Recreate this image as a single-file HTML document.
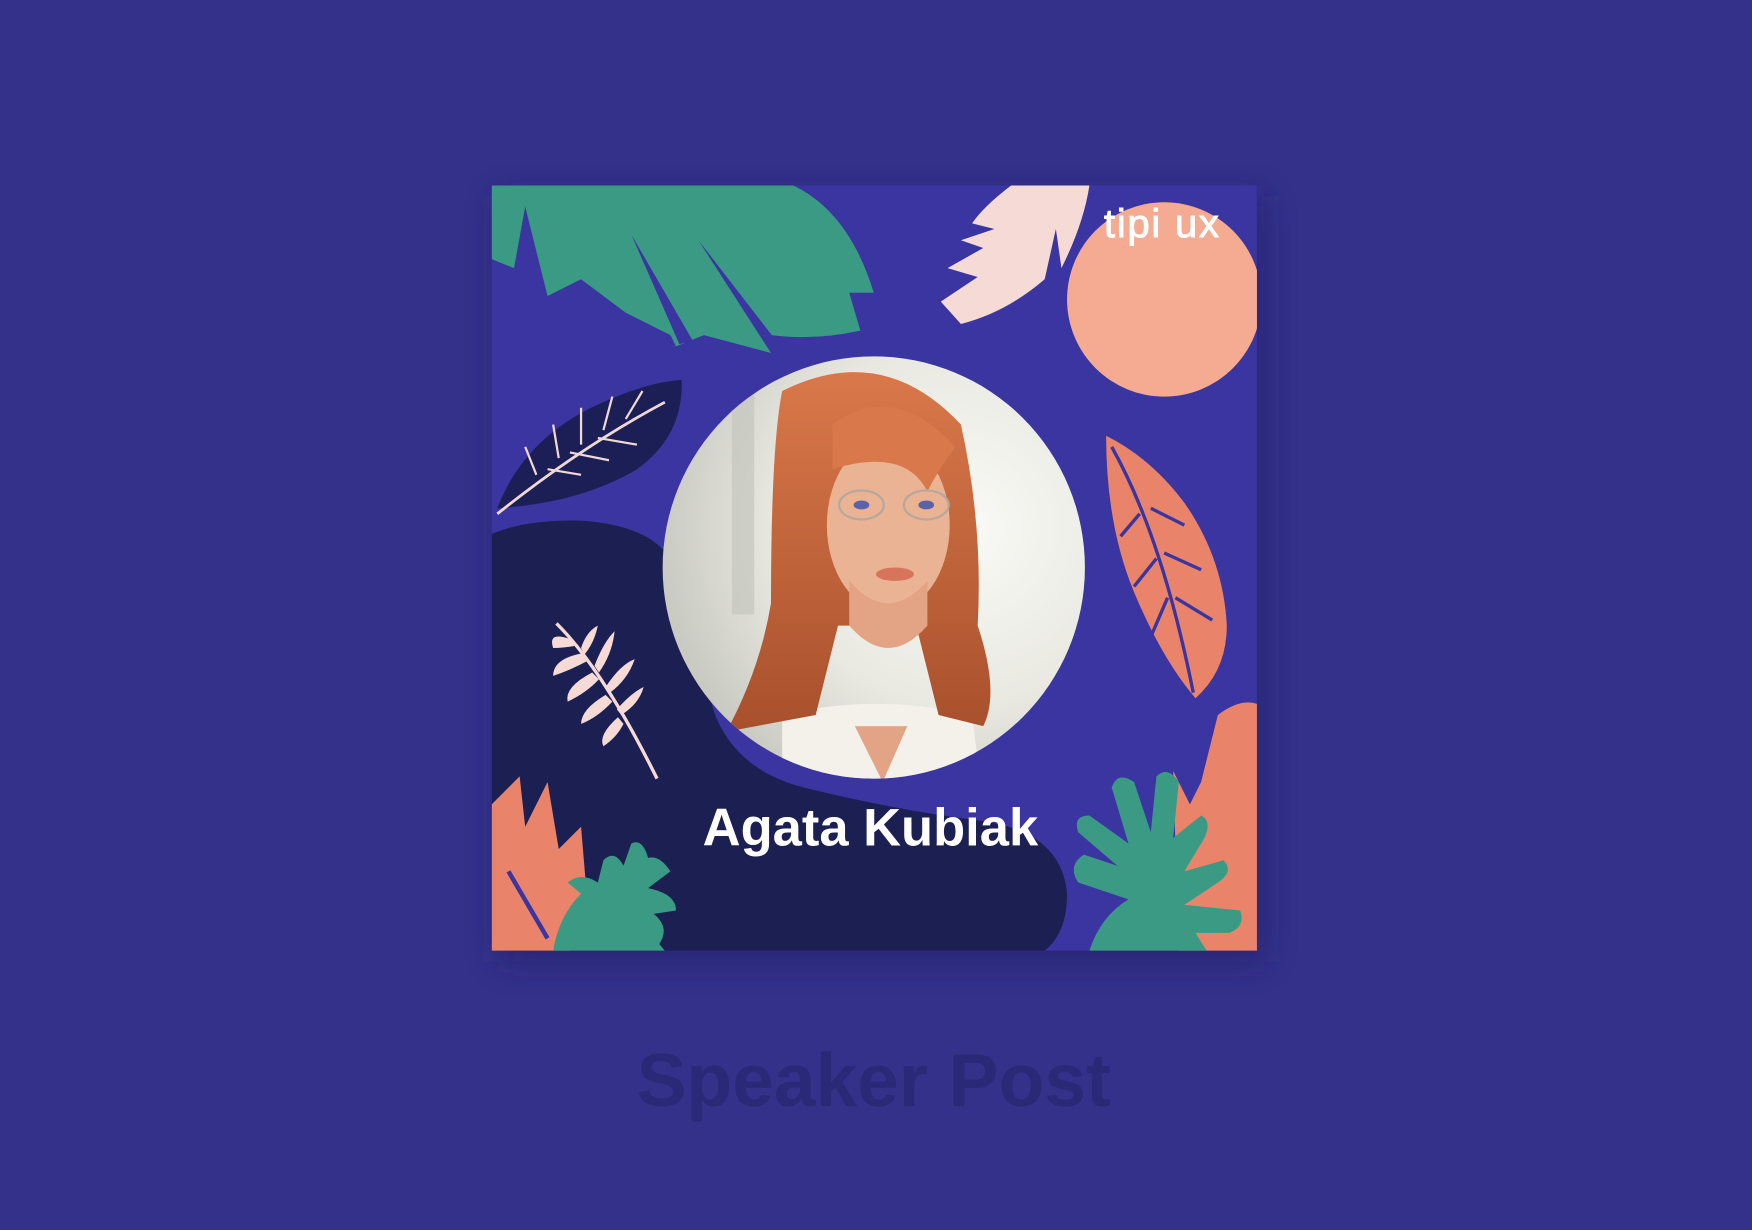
<!DOCTYPE html>
<html><head><meta charset="utf-8"><style>
html,body{margin:0;padding:0;background:#33318a;width:1752px;height:1230px;overflow:hidden}
svg{display:block}
</style></head><body>
<svg width="1752" height="1230" viewBox="0 0 1568 1101" xmlns="http://www.w3.org/2000/svg">
<defs>
<clipPath id="card"><rect x="440" y="166" width="685" height="685"/></clipPath>
<clipPath id="ph"><circle cx="782" cy="508" r="189"/></clipPath>
<filter id="sh" x="-20%" y="-20%" width="140%" height="140%"><feGaussianBlur stdDeviation="14"/></filter>
<radialGradient id="bgp" cx="0.7" cy="0.4" r="0.7"><stop offset="0" stop-color="#fafaf6"/><stop offset="0.6" stop-color="#e9e9e2"/><stop offset="1" stop-color="#c9cac2"/></radialGradient>
<linearGradient id="hair" x1="0" y1="0" x2="0" y2="1"><stop offset="0" stop-color="#d9784a"/><stop offset="1" stop-color="#a8502c"/></linearGradient>
</defs>
<rect width="1568" height="1101" fill="#33318a"/>
<rect x="446" y="176" width="685" height="685" fill="#241f66" opacity="0.6" filter="url(#sh)"/>
<g clip-path="url(#card)">
<rect x="440" y="166" width="685" height="685" fill="#3a35a0"/>
<circle cx="1042" cy="268" r="87" fill="#f4ab92"/>
<path d="M440 166 L710 166 Q760 190 782 262 L760 262 L770 296 Q730 305 690 300 L690 316 L630 300 L605 310 L570 240 L600 300 L560 280 L520 250 L490 265 L470 185 L460 240 L440 232 Z" fill="#3b9a84"/>
<path d="M565 210 L608 308 L620 305 Z M625 215 L690 316 L700 312 Z" fill="#3a35a0"/>
<path d="M975 166 L905 166 Q880 185 870 200 L890 205 L860 215 L880 222 L848 240 L875 248 L842 270 L860 290 Q900 280 935 250 L945 205 L950 240 Q970 200 975 166 Z" fill="#f6dad6"/>
<path d="M445 455 Q470 390 540 360 Q580 342 610 340 Q612 390 570 420 Q520 450 445 455 Z" fill="#1c1f55"/>
<path d="M445 460 Q520 400 595 360" stroke="#f0d8d4" stroke-width="2.5" fill="none"/>
<path d="M480 425 L470 400 M500 410 L495 380 M520 398 L520 365 M540 385 L548 355 M560 375 L575 350 M490 420 L520 425 M510 405 L545 412 M535 392 L570 398" stroke="#f0d8d4" stroke-width="2" fill="none"/>
<path d="M440 478 Q470 465 520 466 Q580 470 600 500 Q615 560 640 640 Q660 690 720 705 Q800 725 880 735 Q950 745 955 800 Q955 835 935 851 L440 851 Z" fill="#1b1f52"/>
<path d="M498 558 Q540 600 588 697" stroke="#f6dad6" stroke-width="3" fill="none"/>
<g fill="#f6dad6">
<path d="M510 572 Q490 565 495 580 Q505 580 515 578Z"/>
<path d="M520 585 Q495 590 495 605 Q510 600 525 592Z"/>
<path d="M530 602 Q505 615 508 628 Q525 620 536 608Z"/>
<path d="M542 622 Q520 635 520 648 Q535 642 548 628Z"/>
<path d="M553 642 Q535 658 540 668 Q552 660 558 648Z"/>
<path d="M520 580 Q525 565 535 560 Q532 575 523 586Z"/>
<path d="M532 596 Q540 575 550 565 Q548 585 536 602Z"/>
<path d="M542 615 Q555 595 568 590 Q562 608 546 620Z"/>
<path d="M552 635 Q565 620 576 615 Q572 630 556 640Z"/>
</g>
<path d="M990 390 Q1030 410 1060 450 Q1095 500 1098 560 Q1098 600 1070 625 Q1040 590 1015 530 Q990 470 990 390 Z" fill="#e9846b"/>
<path d="M995 400 Q1040 480 1068 620" stroke="#3a35a0" stroke-width="3" fill="none"/>
<path d="M1020 460 L1003 480 M1035 500 L1015 525 M1045 535 L1030 570 M1030 455 L1060 470 M1042 495 L1075 510 M1052 535 L1085 555" stroke="#3a35a0" stroke-width="3" fill="none"/>
<path d="M440 720 L465 695 L470 740 L490 700 L500 760 L520 740 L525 800 L510 851 L440 851 Z" fill="#e9846b"/>
<path d="M455 780 L490 840" stroke="#3a35a0" stroke-width="4"/>
<path d="M495 851 Q500 820 520 800 L508 790 Q520 780 535 790 L540 770 Q550 760 558 775 L565 755 Q575 750 580 768 Q590 765 600 780 L580 795 Q605 800 605 815 L585 818 Q600 830 590 845 L595 851 Z" fill="#3b9a84"/>
<path d="M1055 851 L1050 690 L1065 720 L1075 700 L1090 640 Q1110 625 1125 630 L1125 851 Z" fill="#e9846b"/>
<path d="M975 851 Q985 820 1010 805 L965 790 Q955 775 970 765 L1000 775 L965 745 Q960 730 975 730 L1010 755 L995 705 Q1000 690 1015 700 L1030 745 L1035 695 Q1045 685 1055 700 L1050 750 L1075 730 Q1085 735 1078 750 L1060 780 L1095 770 Q1105 780 1090 790 L1060 810 L1110 815 Q1115 830 1100 835 L1070 835 L1080 851 Z" fill="#3b9a84"/>
<g clip-path="url(#ph)">
<rect x="590" y="318" width="385" height="385" fill="url(#bgp)"/>
<rect x="655" y="330" width="20" height="220" fill="#c5c6bc" opacity="0.7"/>
<path d="M700 720 L700 640 Q782 620 870 640 L880 720 Z" fill="#f3f1ea"/>
<path d="M765 650 L790 700 L812 650 Z" fill="#e2a484"/>
<path d="M700 350 Q790 305 860 380 Q880 470 875 560 Q895 620 880 650 L840 640 L820 560 L750 560 L730 640 L650 655 Q680 600 690 540 Q690 400 700 350Z" fill="url(#hair)"/>
<ellipse cx="795" cy="470" rx="55" ry="78" fill="#eab394"/>
<path d="M760 520 Q795 560 830 520 L830 560 Q795 600 760 560Z" fill="#e2a484"/>
<path d="M745 380 Q800 340 855 400 Q840 420 830 440 Q810 400 745 420 Z" fill="#d9784a"/>
<ellipse cx="771" cy="452" rx="20" ry="13" fill="none" stroke="#b6a89e" stroke-width="2"/>
<ellipse cx="829" cy="452" rx="20" ry="13" fill="none" stroke="#b6a89e" stroke-width="2"/>
<ellipse cx="771" cy="452" rx="7" ry="4" fill="#5a62a8"/>
<ellipse cx="829" cy="452" rx="7" ry="4" fill="#5a62a8"/>
<ellipse cx="801" cy="514" rx="17" ry="6" fill="#d9745c"/>
</g>
<text x="988" y="212" font-family="Liberation Sans, sans-serif" font-weight="500" font-size="36" letter-spacing="1.5" fill="#ffffff" stroke="#ffffff" stroke-width="0.8">tipi ux</text>
<text x="779" y="757" text-anchor="middle" font-family="Liberation Sans, sans-serif" font-weight="bold" font-size="47" fill="#ffffff">Agata Kubiak</text>
</g>
<text x="782" y="990" text-anchor="middle" font-family="Liberation Sans, sans-serif" font-weight="bold" font-size="67" fill="#2a2977">Speaker Post</text>
</svg>
</body></html>
